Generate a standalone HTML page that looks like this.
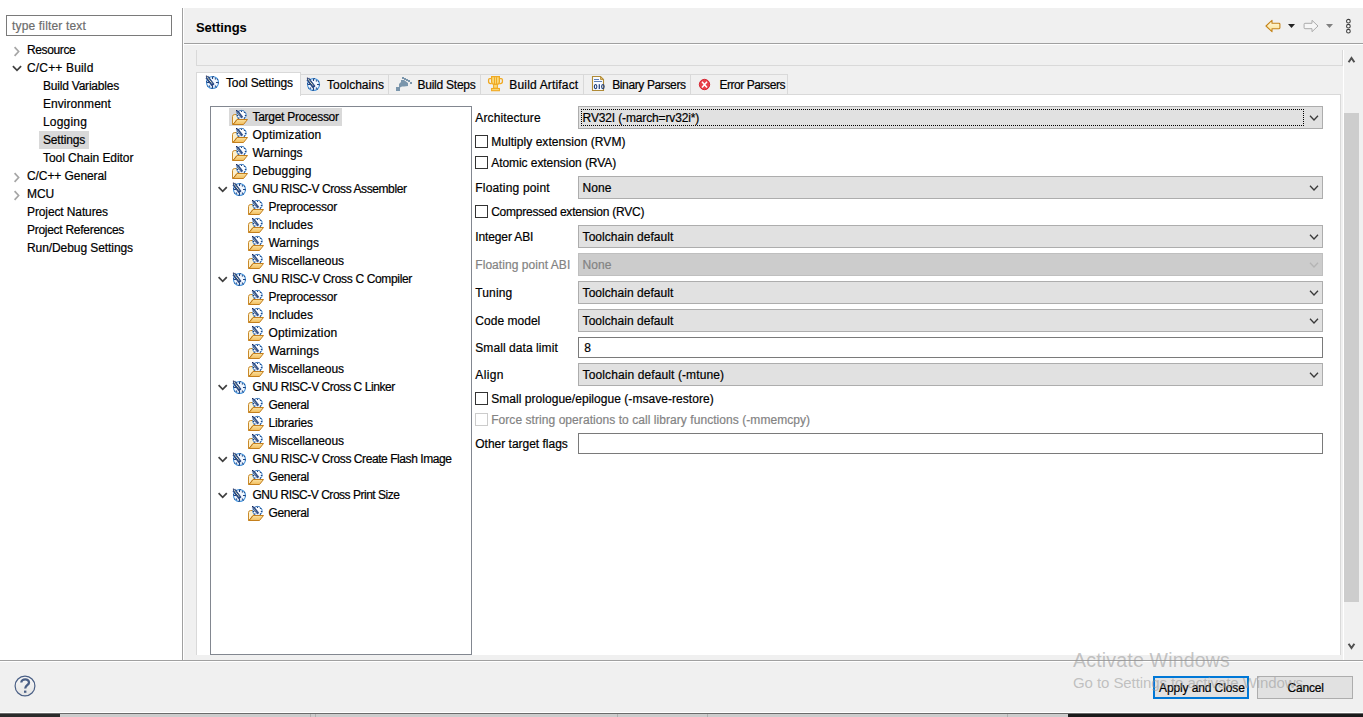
<!DOCTYPE html>
<html><head><meta charset="utf-8"><style>
html,body{margin:0;padding:0}
body{width:1363px;height:717px;overflow:hidden;position:relative;background:#fff;font:12px "Liberation Sans",sans-serif}
.a{position:absolute}
.t{position:absolute;white-space:pre;line-height:18px;-webkit-text-stroke:0.2px currentColor}
svg{display:block}
</style></head><body>
<svg width="0" height="0" style="position:absolute">
<defs>
<linearGradient id="gfold" x1="0" y1="0" x2="0" y2="1"><stop offset="0" stop-color="#fbe2a0"/><stop offset="1" stop-color="#f2bd5c"/></linearGradient>
<linearGradient id="garrow" x1="0" y1="0" x2="0" y2="1"><stop offset="0" stop-color="#fffbe6"/><stop offset="1" stop-color="#fbe08e"/></linearGradient>
<symbol id="i-gear" viewBox="0 0 20 20">
 <circle cx="7.5" cy="8.5" r="6" fill="#f2f7fe" stroke="#4393dd" stroke-width="1.1"/>
 <circle cx="7.5" cy="8.5" r="6" fill="none" stroke="#26487f" stroke-width="1.1" stroke-dasharray="0.9 3.8"/>
 <path d="M7.5 2.6 V5 M7.5 12 V14.4 M1.6 8.5 H4 M11 8.5 H13.4" stroke="#22427a" stroke-width="1.1"/>
 <path d="M4 11.5 h1.2 v1.2 h-1.2z M9.8 11.5 h1.2 v1.2 h-1.2z M9.8 4.3 h1.2 v1.2 h-1.2z" fill="#22427a"/>
 <path d="M3.1 2.3 L9.1 10.2 L6.9 11.9 L0.9 4 Z" fill="#1d3f80" stroke="#1d3f80" stroke-width="0.8" stroke-linejoin="round"/>
 <path d="M2.3 3.4 L7.4 10" stroke="#f7f2c0" stroke-width="1.1" stroke-dasharray="1 0.6"/>
 <rect x="0.9" y="1.6" width="1.2" height="1.2" fill="#1c2550"/>
</symbol>
<symbol id="i-folder" viewBox="0 0 20 20">
 <path d="M0.5 15.5 V7.6 Q0.5 5.5 2.8 5.5 H6 V10.5 H5 L1 15.5 Z" fill="#fdf0cc" stroke="#c98a2a" stroke-width="1"/>
 <circle cx="9.5" cy="6" r="4.6" fill="#fcfdff" stroke="#4a97e2" stroke-width="1"/>
 <circle cx="9.5" cy="6" r="4.6" fill="none" stroke="#2a4a80" stroke-width="1" stroke-dasharray="0.8 2.4"/>
 <path d="M9.5 1.6 V3 M5 6.5 H6.3 M12.8 6.5 H14" stroke="#22427a" stroke-width="1"/>
 <path d="M11.9 3.1 h1 v1 h-1z M6.4 8.3 h1 v1 h-1z M11.9 8.3 h1 v1 h-1z" fill="#22427a"/>
 <path d="M5.9 1.5 L10.9 7.9 L9.3 9.1 L4.3 2.7 Z" fill="#1d3f80" stroke="#1d3f80" stroke-width="0.5" stroke-linejoin="round"/>
 <path d="M5.3 2.9 L9.1 7.8" stroke="#f7f2c0" stroke-width="0.8" stroke-dasharray="0.8 0.8"/>
 <rect x="4" y="1" width="1" height="1" fill="#1c2550"/>
 <path d="M5 10.5 H15.5 L11.5 15.5 H1 Z" fill="url(#gfold)" stroke="#c47f1c" stroke-width="1" stroke-linejoin="round"/>
 <path d="M5.2 10.8 L1.4 15.2" stroke="#b87318" stroke-width="0.9" stroke-dasharray="1 0.7"/>
</symbol>
<symbol id="i-steps" viewBox="0 0 20 20">
 <path d="M4 13 h4 v4 h-4z" fill="#7b96ac"/>
 <path d="M4 13 L4 16.5 L7.5 16.5 L8 13 Z" fill="#7b96ac"/>
 <path d="M7 10 L9 8 L9 6 L12 6 L16 9 L16 12 L12 12.5 L10 12.5 L8 13.5 L7 13.5 Z" fill="#7b96ac"/>
 <path d="M10 3 h2 v2 h-2z M12 4 h2 v2 h-2z M14 5 h2 v2 h-2z M16 6 h2 v2 h-2z M18 8 h2 v2 h-2z" fill="#7b96ac"/>
</symbol>
<symbol id="i-trophy" viewBox="0 0 20 20">
 <path d="M4.6 1.6 H12.4 V6.8 C12.4 8.4 11.4 9.4 9.8 9.4 H7.2 C5.6 9.4 4.6 8.4 4.6 6.8 Z" fill="#f9d978" stroke="#f0a922" stroke-width="1.2"/>
 <path d="M4.4 3.6 H2.8 Q1.6 3.6 1.6 4.8 V6.8 Q1.6 8.6 3.6 8.6 H4.8 M12.6 3.6 H14.2 Q15.4 3.6 15.4 4.8 V6.8 Q15.4 8.6 13.4 8.6 H12.2" fill="none" stroke="#f0a922" stroke-width="1.3"/>
 <path d="M7.5 2.2 V9 M9.5 2.2 V9" stroke="#f0a922" stroke-width="1"/>
 <rect x="6.6" y="9.4" width="3.8" height="3.8" fill="#f9d978" stroke="#f0a922" stroke-width="1"/>
 <rect x="4.6" y="13.5" width="7.8" height="2.2" fill="#f9d978" stroke="#f0a922" stroke-width="1.1"/>
</symbol>
<symbol id="i-binary" viewBox="0 0 20 20">
 <path d="M1.5 1.5 H9.5 L12.5 4.5 V15.5 H1.5 Z" fill="#f7faff" stroke="#b08a35" stroke-width="1.1"/>
 <path d="M9.5 1.5 V4.5 H12.5 Z" fill="#e2b860" stroke="#b08a35" stroke-width="0.8"/>
 <path d="M3 4.5 H8 M3 6.5 H11" stroke="#5e7eb5" stroke-width="1"/>
 <ellipse cx="4.6" cy="11.6" rx="1.25" ry="2.1" fill="none" stroke="#1b3a78" stroke-width="1.1"/>
 <ellipse cx="11.9" cy="11.6" rx="1.25" ry="2.1" fill="none" stroke="#1b3a78" stroke-width="1.1"/>
 <path d="M8.3 9.2 v4.8" stroke="#1b3a78" stroke-width="1.2"/>
</symbol>
<symbol id="i-error" viewBox="0 0 20 20">
 <circle cx="7.5" cy="7.5" r="5.2" fill="#e8414a" stroke="#d31f2b" stroke-width="0.9"/>
 <path d="M5 4.7 L10 10.6 M10 4.7 L5 10.6" stroke="#fff" stroke-width="1.5"/>
</symbol>
</defs></svg>
<div class="a" style="left:6px;top:15px;width:166px;height:21px;box-sizing:border-box;border:1px solid #7a7a7a;background:#fff"></div>
<span class="t" id="t0" style="letter-spacing:0.164px;left:12px;top:17px;color:#6d6d6d;font:12px 'Liberation Sans';line-height:18px;">type filter text</span>
<svg class="a" style="left:13px;top:46px" width="9" height="12"><path d="M1.6 1.2 L5.6 5.5 L1.6 9.8" stroke="#a6a6a6" stroke-width="1.7" fill="none"/></svg>
<span class="t" id="t1" style="letter-spacing:-0.382px;left:27px;top:41px;color:#000;font:12px 'Liberation Sans';line-height:18px;">Resource</span>
<svg class="a" style="left:12px;top:65px" width="11" height="8"><path d="M0.9 1.2 L5 5.4 L9.1 1.2" stroke="#404040" stroke-width="1.7" fill="none"/></svg>
<span class="t" id="t2" style="letter-spacing:0.163px;left:27px;top:59px;color:#000;font:12px 'Liberation Sans';line-height:18px;">C/C++ Build</span>
<span class="t" id="t3" style="letter-spacing:-0.210px;left:43px;top:77px;color:#000;font:12px 'Liberation Sans';line-height:18px;">Build Variables</span>
<span class="t" id="t4" style="letter-spacing:0.057px;left:43px;top:95px;color:#000;font:12px 'Liberation Sans';line-height:18px;">Environment</span>
<span class="t" id="t5" style="letter-spacing:0.183px;left:43px;top:113px;color:#000;font:12px 'Liberation Sans';line-height:18px;">Logging</span>
<div class="a" style="left:39px;top:131px;width:50px;height:18px;background:#d9d9d9"></div>
<span class="t" id="t6" style="letter-spacing:-0.170px;left:43px;top:131px;color:#000;font:12px 'Liberation Sans';line-height:18px;">Settings</span>
<span class="t" id="t7" style="letter-spacing:-0.058px;left:43px;top:149px;color:#000;font:12px 'Liberation Sans';line-height:18px;">Tool Chain Editor</span>
<svg class="a" style="left:13px;top:172px" width="9" height="12"><path d="M1.6 1.2 L5.6 5.5 L1.6 9.8" stroke="#a6a6a6" stroke-width="1.7" fill="none"/></svg>
<span class="t" id="t8" style="letter-spacing:-0.078px;left:27px;top:167px;color:#000;font:12px 'Liberation Sans';line-height:18px;">C/C++ General</span>
<svg class="a" style="left:13px;top:190px" width="9" height="12"><path d="M1.6 1.2 L5.6 5.5 L1.6 9.8" stroke="#a6a6a6" stroke-width="1.7" fill="none"/></svg>
<span class="t" id="t9" style="letter-spacing:-0.109px;left:27px;top:185px;color:#000;font:12px 'Liberation Sans';line-height:18px;">MCU</span>
<span class="t" id="t10" style="letter-spacing:-0.114px;left:27px;top:203px;color:#000;font:12px 'Liberation Sans';line-height:18px;">Project Natures</span>
<span class="t" id="t11" style="letter-spacing:-0.280px;left:27px;top:221px;color:#000;font:12px 'Liberation Sans';line-height:18px;">Project References</span>
<span class="t" id="t12" style="letter-spacing:-0.078px;left:27px;top:239px;color:#000;font:12px 'Liberation Sans';line-height:18px;">Run/Debug Settings</span>
<div class="a" style="left:182px;top:8px;width:1px;height:652px;background:#a0a0a0"></div>
<div class="a" style="left:183px;top:8px;width:1px;height:652px;background:#fff"></div>
<div class="a" style="left:184px;top:8px;width:1179px;height:652px;background:#f0f0f0"></div>
<div class="a" style="left:184px;top:43px;width:1179px;height:1px;background:#a0a0a0"></div>
<div class="a" style="left:184px;top:44px;width:1179px;height:1px;background:#fff"></div>
<span class="t" id="t13" style="letter-spacing:-0.062px;left:196px;top:19px;color:#000;font:bold 13px 'Liberation Sans';line-height:18px;-webkit-text-stroke:0.05px">Settings</span>
<svg class="a" style="left:1264px;top:18px" width="90" height="18">
<path d="M2 8 L8 2.3 L8 5.3 L15 5.3 Q15.9 5.3 15.9 6.2 V9.8 Q15.9 10.7 15 10.7 L8 10.7 L8 13.7 Z" fill="url(#garrow)" stroke="#c48218" stroke-width="1.1" stroke-linejoin="round"/>
<path d="M24 6 L31 6 L27.5 10 Z" fill="#222"/>
<path d="M54 8 L48 2.3 L48 5.3 L41 5.3 Q40.1 5.3 40.1 6.2 V9.8 Q40.1 10.7 41 10.7 L48 10.7 L48 13.7 Z" fill="#f6f6f6" stroke="#ababab" stroke-width="1" stroke-linejoin="round"/>
<path d="M62 6 L69 6 L65.5 10 Z" fill="#808080"/>
<circle cx="84.4" cy="3.2" r="1.85" fill="#fafafa" stroke="#3c3c3c" stroke-width="1.05"/>
<circle cx="84.4" cy="8.2" r="1.85" fill="#fafafa" stroke="#3c3c3c" stroke-width="1.05"/>
<circle cx="84.4" cy="13.2" r="1.85" fill="#fafafa" stroke="#3c3c3c" stroke-width="1.05"/>
</svg>
<div class="a" style="left:196px;top:50px;width:1147px;height:16px;box-sizing:border-box;border:1px solid #d9d9d9;border-top:none"></div>
<div class="a" style="left:1343px;top:50px;width:1px;height:610px;background:#fff"></div>
<div class="a" style="left:196px;top:94px;width:1145px;height:561px;box-sizing:border-box;border:1px solid #d9d9d9;border-bottom:none;background:#fff"></div>
<div class="a" style="left:196px;top:72px;width:105px;height:24px;box-sizing:border-box;border:1px solid #d9d9d9;border-bottom:none;background:#fff"></div>
<svg class="a" style="left:205px;top:74px;overflow:visible" width="20" height="20"><use href="#i-gear"/></svg>
<span class="t" id="t14" style="letter-spacing:-0.132px;left:226px;top:74px;color:#000;font:12px 'Liberation Sans';line-height:18px;">Tool Settings</span>
<div class="a" style="left:300px;top:74px;width:89px;height:21px;box-sizing:border-box;border:1px solid #d9d9d9;background:#f0f0f0"></div>
<svg class="a" style="left:306px;top:76px;overflow:visible" width="20" height="20"><use href="#i-gear"/></svg>
<span class="t" id="t15" style="letter-spacing:0.030px;left:327px;top:76px;color:#000;font:12px 'Liberation Sans';line-height:18px;">Toolchains</span>
<div class="a" style="left:388px;top:74px;width:93px;height:21px;box-sizing:border-box;border:1px solid #d9d9d9;background:#f0f0f0"></div>
<svg class="a" style="left:392px;top:74px;overflow:visible" width="20" height="20"><use href="#i-steps"/></svg>
<span class="t" id="t16" style="letter-spacing:-0.246px;left:417.5px;top:76px;color:#000;font:12px 'Liberation Sans';line-height:18px;">Build Steps</span>
<div class="a" style="left:480px;top:74px;width:104px;height:21px;box-sizing:border-box;border:1px solid #d9d9d9;background:#f0f0f0"></div>
<svg class="a" style="left:487px;top:75px;overflow:visible" width="20" height="20"><use href="#i-trophy"/></svg>
<span class="t" id="t17" style="letter-spacing:0.164px;left:509.3px;top:76px;color:#000;font:12px 'Liberation Sans';line-height:18px;">Build Artifact</span>
<div class="a" style="left:583px;top:74px;width:108px;height:21px;box-sizing:border-box;border:1px solid #d9d9d9;background:#f0f0f0"></div>
<svg class="a" style="left:591px;top:75px;overflow:visible" width="20" height="20"><use href="#i-binary"/></svg>
<span class="t" id="t18" style="letter-spacing:-0.372px;left:612.2px;top:76px;color:#000;font:12px 'Liberation Sans';line-height:18px;">Binary Parsers</span>
<div class="a" style="left:690px;top:74px;width:98px;height:21px;box-sizing:border-box;border:1px solid #d9d9d9;background:#f0f0f0"></div>
<svg class="a" style="left:697px;top:77px;overflow:visible" width="20" height="20"><use href="#i-error"/></svg>
<span class="t" id="t19" style="letter-spacing:-0.442px;left:719.4px;top:76px;color:#000;font:12px 'Liberation Sans';line-height:18px;">Error Parsers</span>
<div class="a" style="left:197px;top:94px;width:103px;height:1px;background:#fff"></div>
<div class="a" style="left:210px;top:106px;width:262px;height:549px;box-sizing:border-box;border:1px solid #828790;background:#fff"></div>
<div class="a" style="left:229px;top:108px;width:113px;height:18px;background:#d9d9d9"></div>
<svg class="a" style="left:232px;top:109px" width="20" height="20"><use href="#i-folder"/></svg>
<span class="t" id="t20" style="letter-spacing:-0.281px;left:252.5px;top:108px;color:#000;font:12px 'Liberation Sans';line-height:18px;">Target Processor</span>
<svg class="a" style="left:232px;top:127px" width="20" height="20"><use href="#i-folder"/></svg>
<span class="t" id="t21" style="letter-spacing:0.191px;left:252.5px;top:126px;color:#000;font:12px 'Liberation Sans';line-height:18px;">Optimization</span>
<svg class="a" style="left:232px;top:145px" width="20" height="20"><use href="#i-folder"/></svg>
<span class="t" id="t22" style="letter-spacing:-0.031px;left:252.5px;top:144px;color:#000;font:12px 'Liberation Sans';line-height:18px;">Warnings</span>
<svg class="a" style="left:232px;top:163px" width="20" height="20"><use href="#i-folder"/></svg>
<span class="t" id="t23" style="letter-spacing:0.104px;left:252.5px;top:162px;color:#000;font:12px 'Liberation Sans';line-height:18px;">Debugging</span>
<svg class="a" style="left:218px;top:186px" width="11" height="8"><path d="M0.6 1.2 L4.7 5.4 L8.8 1.2" stroke="#404040" stroke-width="1.7" fill="none"/></svg>
<svg class="a" style="left:232px;top:181px" width="20" height="20"><use href="#i-gear"/></svg>
<span class="t" id="t24" style="letter-spacing:-0.412px;left:252.5px;top:180px;color:#000;font:12px 'Liberation Sans';line-height:18px;">GNU RISC-V Cross Assembler</span>
<svg class="a" style="left:248px;top:199px" width="20" height="20"><use href="#i-folder"/></svg>
<span class="t" id="t25" style="letter-spacing:-0.231px;left:268.4px;top:198px;color:#000;font:12px 'Liberation Sans';line-height:18px;">Preprocessor</span>
<svg class="a" style="left:248px;top:217px" width="20" height="20"><use href="#i-folder"/></svg>
<span class="t" id="t26" style="letter-spacing:-0.025px;left:268.4px;top:216px;color:#000;font:12px 'Liberation Sans';line-height:18px;">Includes</span>
<svg class="a" style="left:248px;top:235px" width="20" height="20"><use href="#i-folder"/></svg>
<span class="t" id="t27" style="letter-spacing:0.044px;left:268.4px;top:234px;color:#000;font:12px 'Liberation Sans';line-height:18px;">Warnings</span>
<svg class="a" style="left:248px;top:253px" width="20" height="20"><use href="#i-folder"/></svg>
<span class="t" id="t28" style="letter-spacing:-0.027px;left:268.4px;top:252px;color:#000;font:12px 'Liberation Sans';line-height:18px;">Miscellaneous</span>
<svg class="a" style="left:218px;top:276px" width="11" height="8"><path d="M0.6 1.2 L4.7 5.4 L8.8 1.2" stroke="#404040" stroke-width="1.7" fill="none"/></svg>
<svg class="a" style="left:232px;top:271px" width="20" height="20"><use href="#i-gear"/></svg>
<span class="t" id="t29" style="letter-spacing:-0.340px;left:252.5px;top:270px;color:#000;font:12px 'Liberation Sans';line-height:18px;">GNU RISC-V Cross C Compiler</span>
<svg class="a" style="left:248px;top:289px" width="20" height="20"><use href="#i-folder"/></svg>
<span class="t" id="t30" style="letter-spacing:-0.231px;left:268.4px;top:288px;color:#000;font:12px 'Liberation Sans';line-height:18px;">Preprocessor</span>
<svg class="a" style="left:248px;top:307px" width="20" height="20"><use href="#i-folder"/></svg>
<span class="t" id="t31" style="letter-spacing:-0.025px;left:268.4px;top:306px;color:#000;font:12px 'Liberation Sans';line-height:18px;">Includes</span>
<svg class="a" style="left:248px;top:325px" width="20" height="20"><use href="#i-folder"/></svg>
<span class="t" id="t32" style="letter-spacing:0.191px;left:268.4px;top:324px;color:#000;font:12px 'Liberation Sans';line-height:18px;">Optimization</span>
<svg class="a" style="left:248px;top:343px" width="20" height="20"><use href="#i-folder"/></svg>
<span class="t" id="t33" style="letter-spacing:0.044px;left:268.4px;top:342px;color:#000;font:12px 'Liberation Sans';line-height:18px;">Warnings</span>
<svg class="a" style="left:248px;top:361px" width="20" height="20"><use href="#i-folder"/></svg>
<span class="t" id="t34" style="letter-spacing:-0.027px;left:268.4px;top:360px;color:#000;font:12px 'Liberation Sans';line-height:18px;">Miscellaneous</span>
<svg class="a" style="left:218px;top:384px" width="11" height="8"><path d="M0.6 1.2 L4.7 5.4 L8.8 1.2" stroke="#404040" stroke-width="1.7" fill="none"/></svg>
<svg class="a" style="left:232px;top:379px" width="20" height="20"><use href="#i-gear"/></svg>
<span class="t" id="t35" style="letter-spacing:-0.446px;left:252.5px;top:378px;color:#000;font:12px 'Liberation Sans';line-height:18px;">GNU RISC-V Cross C Linker</span>
<svg class="a" style="left:248px;top:397px" width="20" height="20"><use href="#i-folder"/></svg>
<span class="t" id="t36" style="letter-spacing:-0.315px;left:268.4px;top:396px;color:#000;font:12px 'Liberation Sans';line-height:18px;">General</span>
<svg class="a" style="left:248px;top:415px" width="20" height="20"><use href="#i-folder"/></svg>
<span class="t" id="t37" style="letter-spacing:-0.170px;left:268.4px;top:414px;color:#000;font:12px 'Liberation Sans';line-height:18px;">Libraries</span>
<svg class="a" style="left:248px;top:433px" width="20" height="20"><use href="#i-folder"/></svg>
<span class="t" id="t38" style="letter-spacing:-0.027px;left:268.4px;top:432px;color:#000;font:12px 'Liberation Sans';line-height:18px;">Miscellaneous</span>
<svg class="a" style="left:218px;top:456px" width="11" height="8"><path d="M0.6 1.2 L4.7 5.4 L8.8 1.2" stroke="#404040" stroke-width="1.7" fill="none"/></svg>
<svg class="a" style="left:232px;top:451px" width="20" height="20"><use href="#i-gear"/></svg>
<span class="t" id="t39" style="letter-spacing:-0.430px;left:252.5px;top:450px;color:#000;font:12px 'Liberation Sans';line-height:18px;">GNU RISC-V Cross Create Flash Image</span>
<svg class="a" style="left:248px;top:469px" width="20" height="20"><use href="#i-folder"/></svg>
<span class="t" id="t40" style="letter-spacing:-0.315px;left:268.4px;top:468px;color:#000;font:12px 'Liberation Sans';line-height:18px;">General</span>
<svg class="a" style="left:218px;top:492px" width="11" height="8"><path d="M0.6 1.2 L4.7 5.4 L8.8 1.2" stroke="#404040" stroke-width="1.7" fill="none"/></svg>
<svg class="a" style="left:232px;top:487px" width="20" height="20"><use href="#i-gear"/></svg>
<span class="t" id="t41" style="letter-spacing:-0.483px;left:252.5px;top:486px;color:#000;font:12px 'Liberation Sans';line-height:18px;">GNU RISC-V Cross Print Size</span>
<svg class="a" style="left:248px;top:505px" width="20" height="20"><use href="#i-folder"/></svg>
<span class="t" id="t42" style="letter-spacing:-0.315px;left:268.4px;top:504px;color:#000;font:12px 'Liberation Sans';line-height:18px;">General</span>
<span class="t" id="t43" style="letter-spacing:0.114px;left:475.3px;top:108.8px;color:#000;font:12px 'Liberation Sans';line-height:18px;">Architecture</span>
<div class="a" style="left:578px;top:106px;width:745px;height:23px;box-sizing:border-box;border:1px solid #adadad;background:#e1e1e1"></div>
<div class="a" style="left:581px;top:109px;width:723px;height:17px;box-sizing:border-box;border:1px dotted #000"></div>
<span class="t" id="t44" style="letter-spacing:-0.137px;left:582.6px;top:109px;color:#000;font:12px 'Liberation Sans';line-height:18px;">RV32I (-march=rv32i*)</span>
<svg class="a" style="left:1308px;top:114px" width="12" height="8"><path d="M2 1.8 L6 6 L10 1.8" stroke="#3a3a3a" stroke-width="1.3" fill="none"/></svg>
<div class="a" style="left:475px;top:135px;width:13px;height:13px;box-sizing:border-box;border:1px solid #333333;background:#fff"></div>
<span class="t" id="t45" style="letter-spacing:0.048px;left:491.2px;top:133px;color:#000;font:12px 'Liberation Sans';line-height:18px;">Multiply extension (RVM)</span>
<div class="a" style="left:475px;top:156px;width:13px;height:13px;box-sizing:border-box;border:1px solid #333333;background:#fff"></div>
<span class="t" id="t46" style="letter-spacing:-0.058px;left:491.2px;top:154px;color:#000;font:12px 'Liberation Sans';line-height:18px;">Atomic extension (RVA)</span>
<span class="t" id="t47" style="letter-spacing:0.175px;left:475.3px;top:178.8px;color:#000;font:12px 'Liberation Sans';line-height:18px;">Floating point</span>
<div class="a" style="left:578px;top:176px;width:745px;height:23px;box-sizing:border-box;border:1px solid #adadad;background:#e1e1e1"></div>
<span class="t" id="t48" style="letter-spacing:0.078px;left:582.6px;top:179px;color:#000;font:12px 'Liberation Sans';line-height:18px;">None</span>
<svg class="a" style="left:1308px;top:184px" width="12" height="8"><path d="M2 1.8 L6 6 L10 1.8" stroke="#3a3a3a" stroke-width="1.3" fill="none"/></svg>
<div class="a" style="left:475px;top:205px;width:13px;height:13px;box-sizing:border-box;border:1px solid #333333;background:#fff"></div>
<span class="t" id="t49" style="letter-spacing:-0.238px;left:491.2px;top:203px;color:#000;font:12px 'Liberation Sans';line-height:18px;">Compressed extension (RVC)</span>
<span class="t" id="t50" style="letter-spacing:-0.125px;left:475.3px;top:227.8px;color:#000;font:12px 'Liberation Sans';line-height:18px;">Integer ABI</span>
<div class="a" style="left:578px;top:225px;width:745px;height:23px;box-sizing:border-box;border:1px solid #adadad;background:#e1e1e1"></div>
<span class="t" id="t51" style="letter-spacing:0.042px;left:582.6px;top:228px;color:#000;font:12px 'Liberation Sans';line-height:18px;">Toolchain default</span>
<svg class="a" style="left:1308px;top:233px" width="12" height="8"><path d="M2 1.8 L6 6 L10 1.8" stroke="#3a3a3a" stroke-width="1.3" fill="none"/></svg>
<span class="t" id="t52" style="letter-spacing:0.052px;left:475.3px;top:255.8px;color:#838383;font:12px 'Liberation Sans';line-height:18px;">Floating point ABI</span>
<div class="a" style="left:578px;top:253px;width:745px;height:23px;box-sizing:border-box;border:1px solid #bfbfbf;background:#cccccc"></div>
<span class="t" id="t53" style="letter-spacing:0.078px;left:582.6px;top:256px;color:#838383;font:12px 'Liberation Sans';line-height:18px;">None</span>
<svg class="a" style="left:1308px;top:261px" width="12" height="8"><path d="M2 1.8 L6 6 L10 1.8" stroke="#b4b4b4" stroke-width="1.3" fill="none"/></svg>
<span class="t" id="t54" style="letter-spacing:0.125px;left:475.3px;top:283.8px;color:#000;font:12px 'Liberation Sans';line-height:18px;">Tuning</span>
<div class="a" style="left:578px;top:281px;width:745px;height:23px;box-sizing:border-box;border:1px solid #adadad;background:#e1e1e1"></div>
<span class="t" id="t55" style="letter-spacing:0.042px;left:582.6px;top:284px;color:#000;font:12px 'Liberation Sans';line-height:18px;">Toolchain default</span>
<svg class="a" style="left:1308px;top:289px" width="12" height="8"><path d="M2 1.8 L6 6 L10 1.8" stroke="#3a3a3a" stroke-width="1.3" fill="none"/></svg>
<span class="t" id="t56" style="letter-spacing:0.028px;left:475.3px;top:311.8px;color:#000;font:12px 'Liberation Sans';line-height:18px;">Code model</span>
<div class="a" style="left:578px;top:309px;width:745px;height:23px;box-sizing:border-box;border:1px solid #adadad;background:#e1e1e1"></div>
<span class="t" id="t57" style="letter-spacing:0.042px;left:582.6px;top:312px;color:#000;font:12px 'Liberation Sans';line-height:18px;">Toolchain default</span>
<svg class="a" style="left:1308px;top:317px" width="12" height="8"><path d="M2 1.8 L6 6 L10 1.8" stroke="#3a3a3a" stroke-width="1.3" fill="none"/></svg>
<span class="t" id="t58" style="letter-spacing:0.071px;left:475.3px;top:338.8px;color:#000;font:12px 'Liberation Sans';line-height:18px;">Small data limit</span>
<div class="a" style="left:578px;top:337px;width:745px;height:21px;box-sizing:border-box;border:1px solid #7a7a7a;background:#fff"></div>
<span class="t" id="t59" style="letter-spacing:0.312px;left:584.3px;top:338.8px;color:#000;font:12px 'Liberation Sans';line-height:18px;">8</span>
<span class="t" id="t60" style="letter-spacing:0.362px;left:475.3px;top:365.8px;color:#000;font:12px 'Liberation Sans';line-height:18px;">Align</span>
<div class="a" style="left:578px;top:363px;width:745px;height:23px;box-sizing:border-box;border:1px solid #adadad;background:#e1e1e1"></div>
<span class="t" id="t61" style="letter-spacing:0.106px;left:582.6px;top:366px;color:#000;font:12px 'Liberation Sans';line-height:18px;">Toolchain default (-mtune)</span>
<svg class="a" style="left:1308px;top:371px" width="12" height="8"><path d="M2 1.8 L6 6 L10 1.8" stroke="#3a3a3a" stroke-width="1.3" fill="none"/></svg>
<div class="a" style="left:475px;top:392px;width:13px;height:13px;box-sizing:border-box;border:1px solid #333333;background:#fff"></div>
<span class="t" id="t62" style="letter-spacing:0.043px;left:491.2px;top:390px;color:#000;font:12px 'Liberation Sans';line-height:18px;">Small prologue/epilogue (-msave-restore)</span>
<div class="a" style="left:475px;top:413px;width:13px;height:13px;box-sizing:border-box;border:1px solid #cccccc;background:#fff"></div>
<span class="t" id="t63" style="letter-spacing:0.059px;left:491.2px;top:411px;color:#838383;font:12px 'Liberation Sans';line-height:18px;">Force string operations to call library functions (-mmemcpy)</span>
<span class="t" id="t64" style="letter-spacing:-0.012px;left:475.3px;top:434.8px;color:#000;font:12px 'Liberation Sans';line-height:18px;">Other target flags</span>
<div class="a" style="left:578px;top:433px;width:745px;height:21px;box-sizing:border-box;border:1px solid #7a7a7a;background:#fff"></div>
<div class="a" style="left:1344px;top:50px;width:16px;height:606px;background:#f0f0f0"></div>
<div class="a" style="left:1344px;top:113px;width:15px;height:489px;background:#cdcdcd"></div>
<svg class="a" style="left:1347px;top:55px" width="10" height="9"><path d="M1.6 7.2 L4.5 3 L7.4 7.2" stroke="#505050" stroke-width="2" fill="none"/></svg>
<svg class="a" style="left:1347px;top:642px" width="10" height="9"><path d="M1.6 1.8 L4.5 6 L7.4 1.8" stroke="#505050" stroke-width="2" fill="none"/></svg>
<div class="a" style="left:0px;top:660px;width:1363px;height:1px;background:#a0a0a0"></div>
<div class="a" style="left:0px;top:661px;width:1363px;height:1px;background:#fff"></div>
<div class="a" style="left:0px;top:662px;width:1363px;height:50px;background:#f0f0f0"></div>
<svg class="a" style="left:14px;top:675px" width="22" height="22"><defs><linearGradient id="ghelp" x1="0" y1="0" x2="0" y2="1"><stop offset="0" stop-color="#f8f8f8"/><stop offset="1" stop-color="#e4e4e4"/></linearGradient></defs><circle cx="11" cy="11" r="9.9" fill="url(#ghelp)" stroke="#4a5f85" stroke-width="1.2"/>
<path d="M7.3 7.6 C7.3 3.2 15.2 3.4 15 7.6 C14.9 10 11.2 10.6 11.2 13.5" fill="none" stroke="#4a5f85" stroke-width="2.3"/><path d="M10 15.6 h2.4 v2.2 h-2.4z" fill="#4a5f85"/></svg>
<div class="a" style="left:1153px;top:676px;width:96px;height:23px;box-sizing:border-box;border:2px solid #0078d7;background:#e1e1e1"></div>
<span class="t" id="t65" style="letter-spacing:-0.113px;left:1159px;top:679px;color:#000;font:12px 'Liberation Sans';line-height:18px;">Apply and Close</span>
<div class="a" style="left:1257px;top:676px;width:96px;height:23px;box-sizing:border-box;border:1px solid #adadad;background:#e1e1e1"></div>
<span class="t" id="t66" style="letter-spacing:-0.227px;left:1287.6px;top:679px;color:#000;font:12px 'Liberation Sans';line-height:18px;">Cancel</span>
<span class="t" id="t67" style="letter-spacing:0.194px;left:1073px;top:648px;color:rgba(150,150,150,0.55);font:19.5px 'Liberation Sans';line-height:18px;line-height:24px;-webkit-text-stroke:0">Activate Windows</span>
<span class="t" id="t68" style="letter-spacing:-0.079px;left:1073px;top:673px;color:rgba(150,150,150,0.55);font:15px 'Liberation Sans';line-height:18px;line-height:20px;-webkit-text-stroke:0">Go to Settings to activate Windows.</span>
<div class="a" style="left:0px;top:712px;width:1363px;height:1px;background:#fff"></div>
<div class="a" style="left:0px;top:713px;width:1363px;height:1px;background:#6b6b6b"></div>
<div class="a" style="left:0px;top:714px;width:1363px;height:3px;background:#cccccc"></div>
<div class="a" style="left:0px;top:714px;width:60px;height:3px;background:#2b2b2b"></div>
<div class="a" style="left:1068px;top:714px;width:295px;height:3px;background:#1a1a1a"></div>
<div class="a" style="left:310px;top:714px;width:1px;height:3px;background:#b0b0b0"></div>
<div class="a" style="left:315px;top:714px;width:1px;height:3px;background:#b0b0b0"></div>
<div class="a" style="left:617px;top:714px;width:1px;height:3px;background:#b0b0b0"></div>
<div class="a" style="left:707px;top:714px;width:1px;height:3px;background:#b0b0b0"></div>
<div class="a" style="left:1007px;top:714px;width:1px;height:3px;background:#b0b0b0"></div>
</body></html>
